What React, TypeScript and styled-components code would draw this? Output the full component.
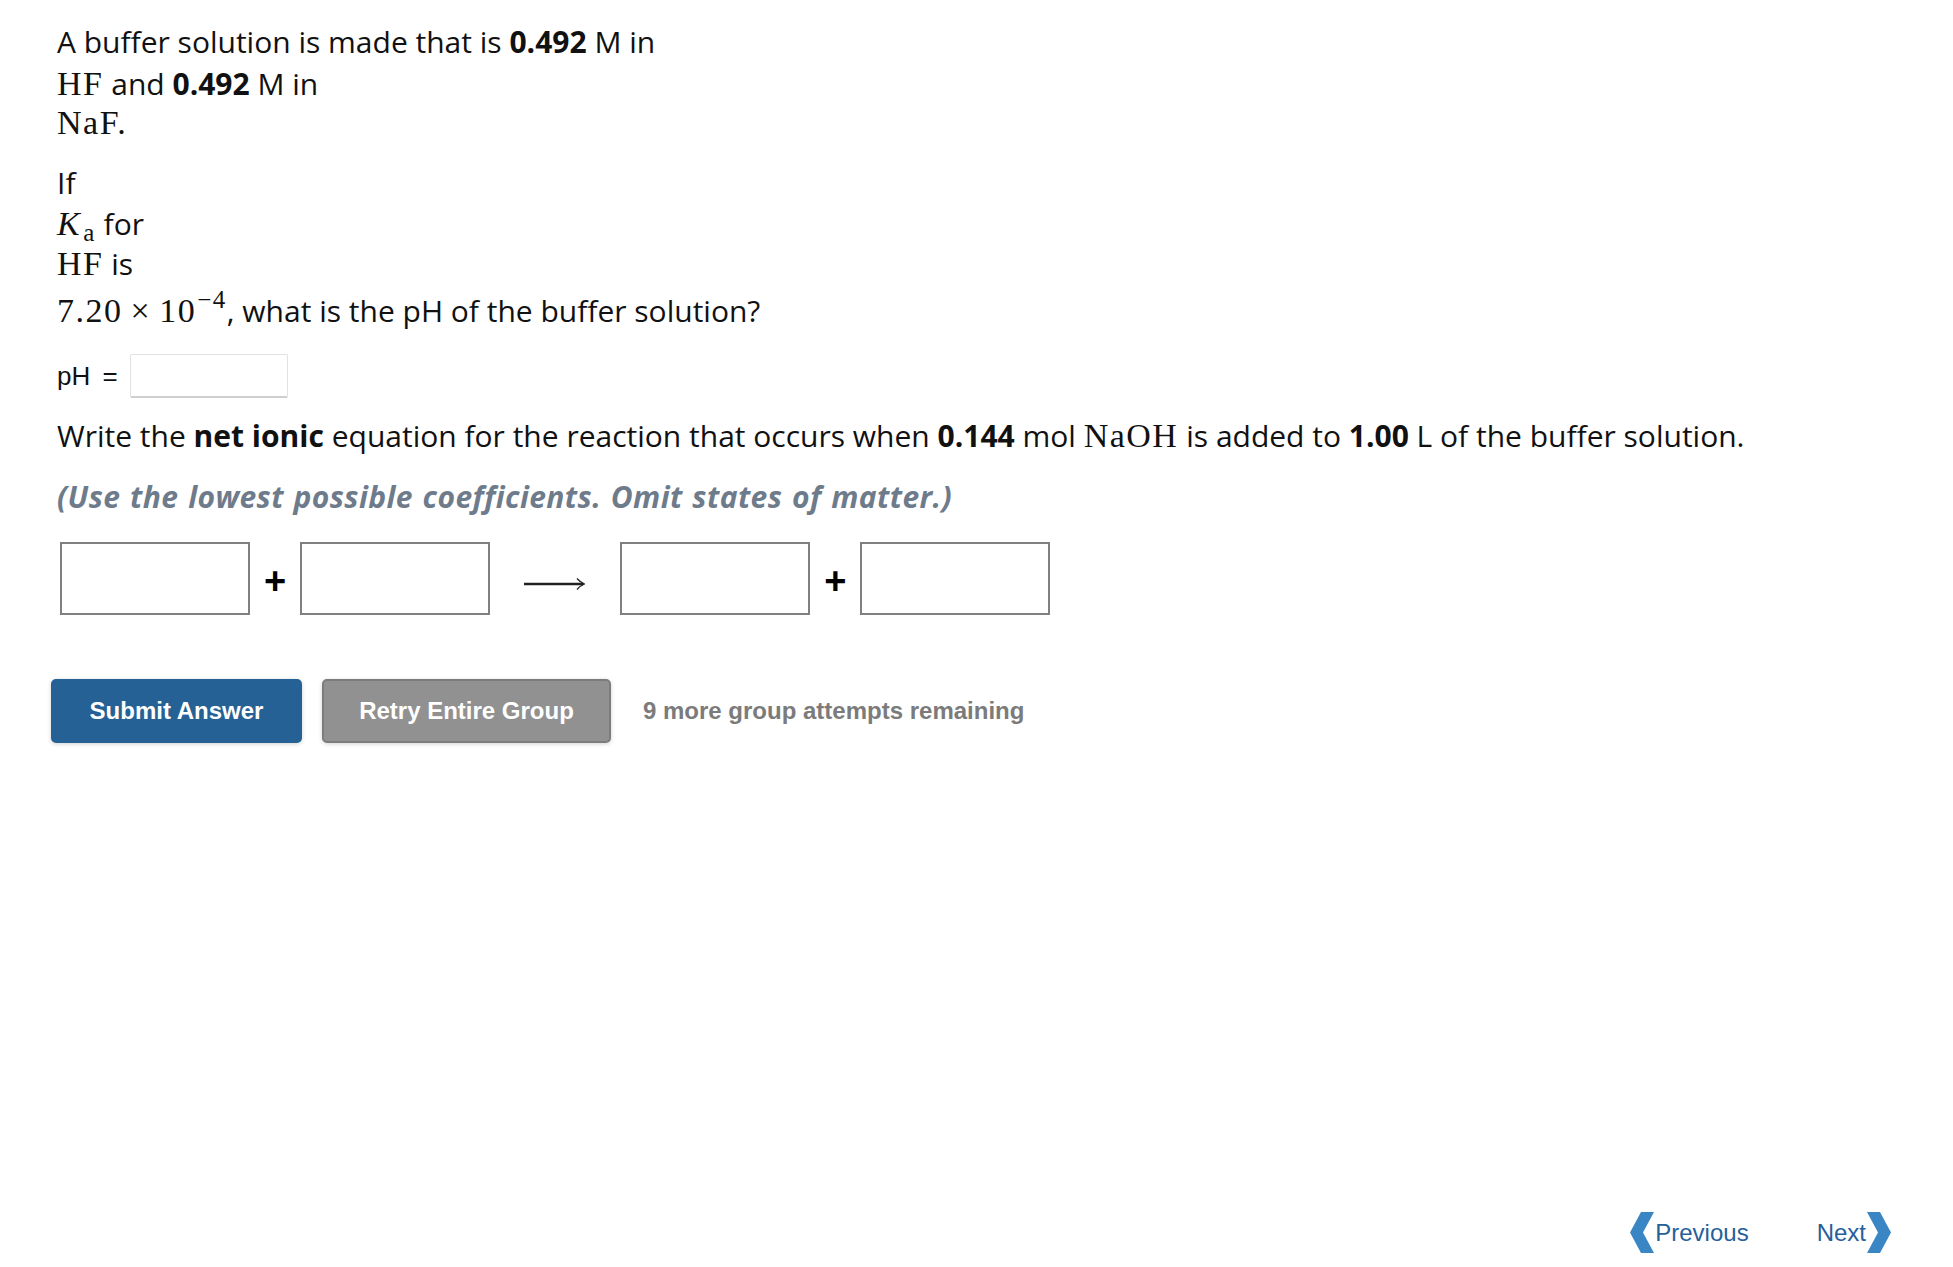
import styled, { createGlobalStyle } from "styled-components";

const GlobalStyle = createGlobalStyle`
  html, body {
    margin: 0;
    padding: 0;
    background: #ffffff;
  }
  body {
    font-family: "Open Sans", "Liberation Sans", sans-serif;
    color: #111111;
  }
  * {
    box-sizing: border-box;
  }
`;

const Page = styled.div`
  min-height: 100vh;
  display: flex;
  flex-direction: column;
  padding: 21px 62px 14px 57px;
`;

const Block = styled.div<{ $gap?: number }>`
  margin-top: ${(p) => p.$gap ?? 0}px;
`;

const Line = styled.div<{ $lh?: number; $pt?: number }>`
  font-size: 30px;
  line-height: ${(p) => p.$lh ?? 40}px;
  padding-top: ${(p) => p.$pt ?? 0}px;
  white-space: nowrap;
`;

const Math = styled.span`
  font-family: "Liberation Serif", "DejaVu Serif", serif;
  font-size: 34px;
  letter-spacing: 1.5px;
`;

const MathItalic = styled.span`
  font-style: italic;
  margin-right: 2px;
`;

const Sub = styled.span`
  font-size: 25px;
  vertical-align: -6px;
  line-height: 0;
`;

const Sup = styled.span`
  font-size: 25px;
  vertical-align: 14px;
  line-height: 0;
  margin-left: 1px;
`;

const Times = styled.span`
  margin: 0 8px;
`;

const Hint = styled.div`
  font-size: 30px;
  line-height: 38px;
  font-weight: 700;
  font-style: italic;
  letter-spacing: 0.4px;
  word-spacing: 1.5px;
  color: #6e7b8b;
  white-space: nowrap;
`;

const AnswerRow = styled.div<{ $gap?: number }>`
  display: flex;
  align-items: center;
  gap: 12px;
  margin-top: ${(p) => p.$gap ?? 0}px;
`;

const AnswerLabel = styled.span`
  font-family: "Liberation Sans", Arial, sans-serif;
  font-size: 26px;
  word-spacing: 5px;
  color: #111;
`;

const TextField = styled.div`
  width: 158px;
  height: 44px;
  border: 1px solid #e2e2e2;
  border-bottom: 2px solid #cfcfcf;
  border-radius: 2px;
  background: #fff;
`;

const Equation = styled.div<{ $gap?: number }>`
  display: flex;
  align-items: center;
  margin-top: ${(p) => p.$gap ?? 0}px;
  margin-left: 3px;
`;

const ChemBox = styled.div`
  width: 190px;
  height: 73px;
  border: 2px solid #808080;
  background: #fff;
`;

const Plus = styled.span`
  font-family: "Liberation Sans", Arial, sans-serif;
  font-weight: 700;
  font-size: 38px;
  line-height: 1;
  color: #000;
  margin: 4px 14px 0;
`;

const Arrow = styled.svg`
  margin: 10px 35px 0 34px;
`;

const Actions = styled.div<{ $gap?: number }>`
  display: flex;
  align-items: center;
  margin-top: ${(p) => p.$gap ?? 0}px;
  margin-left: -6px;
`;

const Button = styled.button<{ $variant: "primary" | "secondary"; $w: number }>`
  width: ${(p) => p.$w}px;
  height: 64px;
  border-radius: 5px;
  font-family: "Liberation Sans", Helvetica, Arial, sans-serif;
  font-weight: 700;
  font-size: 24px;
  color: #fff;
  cursor: pointer;
  background: ${(p) => (p.$variant === "primary" ? "#266196" : "#919191")};
  border: 2px solid ${(p) => (p.$variant === "primary" ? "#266196" : "#7c7c7c")};
  box-shadow: 0 1px 4px rgba(0, 0, 0, 0.18);
  margin-right: 20px;
`;

const Attempts = styled.span`
  font-family: "Liberation Sans", Helvetica, Arial, sans-serif;
  font-weight: 700;
  font-size: 24px;
  color: #7b7b7b;
  margin-left: 12px;
`;

const Nav = styled.nav`
  margin-top: auto;
  display: flex;
  justify-content: flex-end;
  align-items: center;
  gap: 68px;
`;

const NavLink = styled.a`
  display: flex;
  align-items: center;
  gap: 1px;
  font-family: "Liberation Sans", Arial, sans-serif;
  font-size: 24px;
  color: #26609a;
  text-decoration: none;
  cursor: pointer;
`;

function Chevron({ dir }: { dir: "left" | "right" }) {
  const pts =
    dir === "left"
      ? "11,0 24,0 13,20.5 24,41 11,41 0,20.5"
      : "0,0 13,0 24,20.5 13,41 0,41 11,20.5";
  return (
    <svg width="24" height="41" viewBox="0 0 24 41" style={{ filter: "blur(0.5px)" }}>
      <polygon points={pts} fill="#3a86c4" />
    </svg>
  );
}

export default function App() {
  return (
    <>
      <GlobalStyle />
      <Page>
        <Block>
          <Line $lh={42}>
            A buffer solution is made that is <b>0.492</b> M in
          </Line>
          <Line $lh={41}>
            <Math>HF</Math> and <b>0.492</b> M in
          </Line>
          <Line $lh={38}>
            <Math>NaF.</Math>
          </Line>
        </Block>

        <Block $gap={19}>
          <Line $lh={43}>If</Line>
          <Line>
            <Math>
              <MathItalic>K</MathItalic>
              <Sub>a</Sub>
            </Math>{" "}
            for
          </Line>
          <Line>
            <Math>HF</Math> is
          </Line>
          <Line $pt={7}>
            <Math>
              7.20<Times>×</Times>10<Sup>−4</Sup>
            </Math>
            , what is the pH of the buffer solution?
          </Line>
        </Block>

        <AnswerRow $gap={23}>
          <AnswerLabel>pH =</AnswerLabel>
          <TextField />
        </AnswerRow>

        <Block $gap={18}>
          <Line>
            Write the <b>net ionic</b> equation for the reaction that occurs when <b>0.144</b> mol{" "}
            <Math>NaOH</Math> is added to <b>1.00</b> L of the buffer solution.
          </Line>
        </Block>

        <Block $gap={22}>
          <Hint>(Use the lowest possible coefficients. Omit states of matter.)</Hint>
        </Block>

        <Equation $gap={26}>
          <ChemBox />
          <Plus>+</Plus>
          <ChemBox />
          <Arrow width="61" height="16" viewBox="0 0 61 16">
            <line x1="0" y1="8" x2="59" y2="8" stroke="#222" strokeWidth="2.6" />
            <path d="M53 2.5 Q56.5 6.5 60.5 8 Q56.5 9.5 53 13.5" fill="none" stroke="#222" strokeWidth="1.3" />
          </Arrow>
          <ChemBox />
          <Plus>+</Plus>
          <ChemBox />
        </Equation>

        <Actions $gap={64}>
          <Button $variant="primary" $w={251}>
            Submit Answer
          </Button>
          <Button $variant="secondary" $w={289}>
            Retry Entire Group
          </Button>
          <Attempts>9 more group attempts remaining</Attempts>
        </Actions>

        <Nav>
          <NavLink>
            <Chevron dir="left" />
            Previous
          </NavLink>
          <NavLink>
            Next
            <Chevron dir="right" />
          </NavLink>
        </Nav>
      </Page>
    </>
  );
}
